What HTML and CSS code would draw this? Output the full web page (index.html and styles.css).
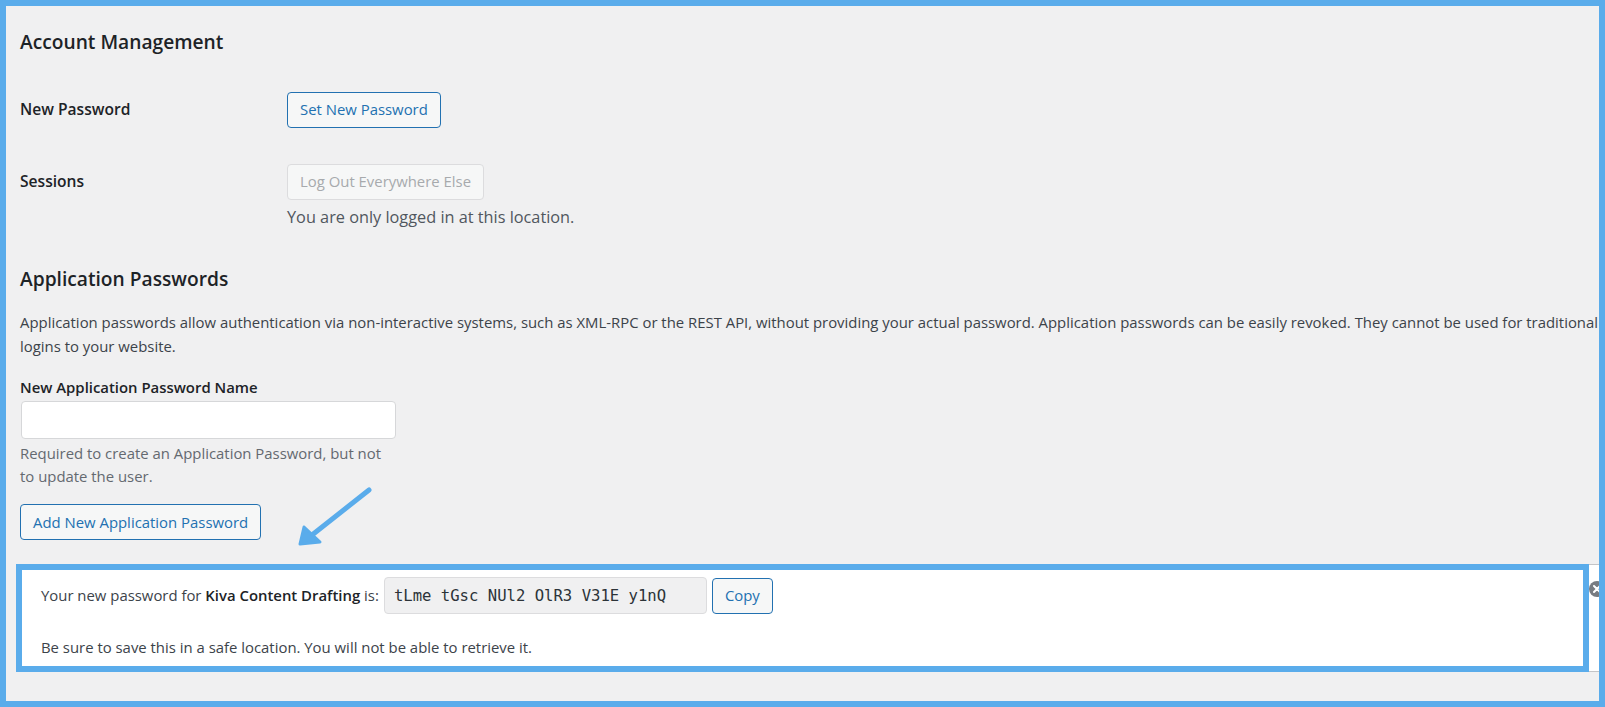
FILE: index.html
```html
<!doctype html>
<html>

<head>
    <title>Profile - Application Passwords</title>
    <link rel="stylesheet" href="styles.css">
</head>

<body>
    <div class="frame">
        <div class="page">
            <h2 class="section-title first">Account Management</h2>
            <table class="form-table">
                <tr>
                    <th>New Password</th>
                    <td>
                        <div class="cell-stack">
                            <button class="button">Set New Password</button>
                        </div>
                    </td>
                </tr>
                <tr>
                    <th>Sessions</th>
                    <td>
                        <div class="cell-stack">
                            <button class="button" disabled>Log Out Everywhere Else</button>
                            <p class="description">You are only logged in at this location.</p>
                        </div>
                    </td>
                </tr>
            </table>

            <h2 class="section-title">Application Passwords</h2>
            <p class="intro">Application passwords allow authentication via non-interactive systems, such as XML-RPC or the REST API, without providing your actual password. Application passwords can be easily revoked. They cannot be used for traditional password<br>logins to your website.</p>

            <label class="field-label" for="app-name">New Application Password Name</label>
            <input class="text-input" id="app-name" type="text">
            <p class="hint">Required to create an Application Password, but not<br>to update the user.</p>

            <div class="button-row">
                <button class="button">Add New Application Password</button>
            </div>

            <div class="notice">
                <div class="pw-row">
                    <span>Your new password for <strong>Kiva Content Drafting</strong> is:</span>
                    <input class="pw-input" type="text" readonly value="tLme tGsc NUl2 OlR3 V31E y1nQ">
                    <button class="button">Copy</button>
                </div>
                <p class="pw-warning">Be sure to save this in a safe location. You will not be able to retrieve it.</p>
                <span class="notice-dismiss">
                    <svg width="16" height="16" viewBox="0 0 16 16">
                        <circle cx="8" cy="8" r="8" fill="#787c82" />
                        <path d="M5 5 L11 11 M11 5 L5 11" stroke="#fff" stroke-width="2" stroke-linecap="round" />
                    </svg>
                </span>
                <div class="callout"></div>
            </div>
        </div>

        <svg class="arrow" width="80" height="70" viewBox="0 0 80 70">
            <path d="M73 4 L16 49" stroke="#5aaceb" stroke-width="5" stroke-linecap="round" fill="none" />
            <polygon points="4,58 8,41 24,56" fill="#5aaceb" stroke="#5aaceb" stroke-width="3" stroke-linejoin="round" />
        </svg>
    </div>
</body>

</html>
```

FILE: styles.css
```css
html,
body {
    margin: 0;
    padding: 0;
    width: 100%;
    height: 100%;
    overflow: hidden;
}

* {
    box-sizing: border-box;
}

body {
    background: #f0f0f1;
    font-family: "Open Sans", "Noto Sans", sans-serif;
    font-size: 14.9px;
    line-height: 23.4px;
    color: #3c434a;
}

.frame {
    position: relative;
    height: 100%;
    border: 6px solid #5aaceb;
    overflow: hidden;
}

.page {
    width: 1700px;
    padding-left: 14px;
}

.section-title {
    margin: 19px 0;
    font-size: 19.2px;
    line-height: 26px;
    font-weight: 600;
    color: #1d2327;
}

.section-title.first {
    margin-top: 23px;
}

.form-table {
    border-collapse: collapse;
    border-spacing: 0;
}

.form-table th {
    width: 255px;
    padding: 24px 0;
    text-align: left;
    vertical-align: top;
    font-size: 15.6px;
    font-weight: 600;
    color: #1d2327;
}

.form-table td {
    padding: 18px 0 18px 12px;
    vertical-align: top;
}

.cell-stack {
    display: flex;
    flex-direction: column;
    align-items: flex-start;
}

.button {
    display: inline-flex;
    align-items: center;
    height: 36px;
    margin: 0;
    padding: 0 12px;
    font: inherit;
    color: #2271b1;
    background: #f6f7f7;
    border: 1px solid #2271b1;
    border-radius: 4px;
    cursor: pointer;
}

.button:disabled {
    color: #a7aaad;
    border-color: #dcdcde;
    background: #f6f7f7;
    cursor: default;
}

.description {
    margin: 6px 0 0;
    font-size: 16.3px;
    color: #50575e;
}

.intro {
    margin: 0;
    white-space: nowrap;
}

.field-label {
    display: block;
    margin-top: 18px;
    font-weight: 600;
    color: #1d2327;
}

.text-input {
    display: block;
    width: 375px;
    height: 38px;
    margin: 1px 0 0 1px;
    border: 1px solid #d6d7d9;
    border-radius: 4px;
    background: #fff;
}

.hint {
    margin: 3px 0 0;
    color: #646970;
    white-space: nowrap;
}

.button-row {
    display: flex;
    margin-top: 16px;
}

.notice {
    position: relative;
    width: 1597px;
    margin: 24px 0 0 -4px;
    padding: 12px 20px 11px 20px;
    background: #fff;
    border: 1px solid #c3c4c7;
    border-left: 5px solid #00a32a;
}

.pw-row {
    display: flex;
    align-items: center;
    gap: 5px;
}

.pw-input {
    width: 323px;
    height: 37px;
    padding: 0 9px;
    font-family: "DejaVu Sans Mono", monospace;
    font-size: 15.6px;
    color: #2c3338;
    background: #f0f0f1;
    border: 1px solid #dcdcde;
    border-radius: 4px;
    outline: none;
}

.pw-row strong {
    font-weight: 600;
    color: #1d2327;
}

.pw-warning {
    margin: 22px 0 0;
}

.notice-dismiss {
    position: absolute;
    top: 16px;
    right: 7px;
    width: 16px;
    height: 16px;
    line-height: 0;
}

.callout {
    position: absolute;
    left: -5px;
    top: -1px;
    width: 1573px;
    height: 108px;
    border: 6px solid #5aaceb;
    pointer-events: none;
}

.arrow {
    position: absolute;
    left: 290px;
    top: 480px;
}
```
